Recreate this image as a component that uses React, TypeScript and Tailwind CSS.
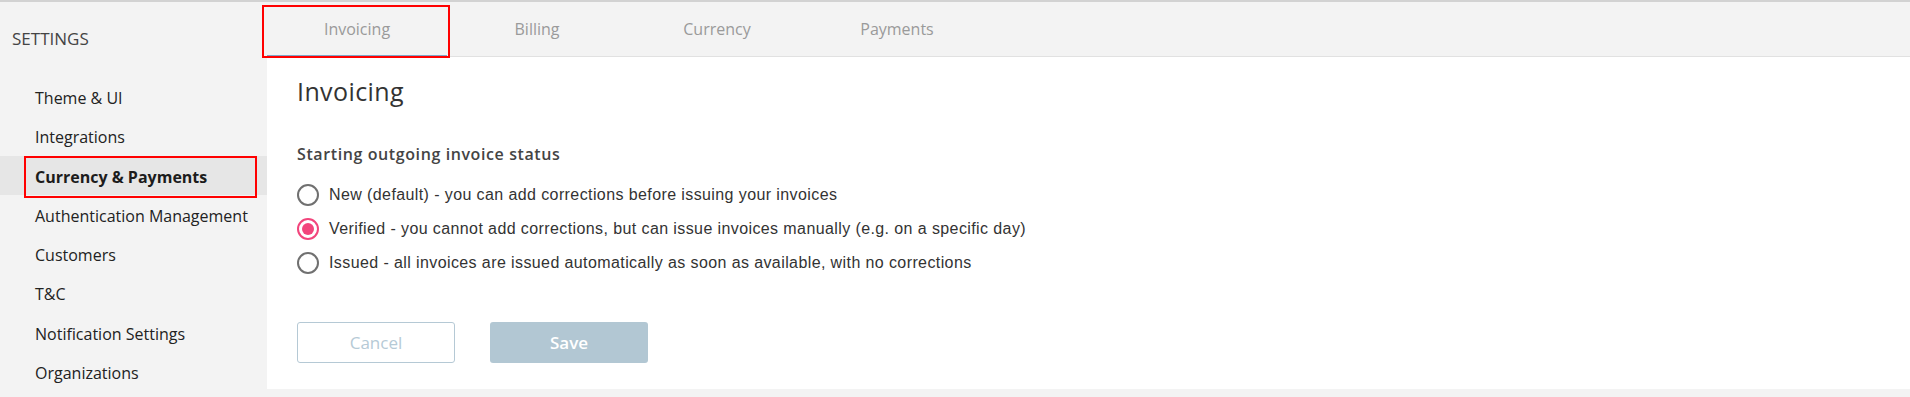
import { useState } from "react";

const sideItems = [
  "Theme & UI",
  "Integrations",
  "Currency & Payments",
  "Authentication Management",
  "Customers",
  "T&C",
  "Notification Settings",
  "Organizations",
];

const tabs = ["Invoicing", "Billing", "Currency", "Payments"];

const options = [
  "New (default) - you can add corrections before issuing your invoices",
  "Verified - you cannot add corrections, but can issue invoices manually (e.g. on a specific day)",
  "Issued - all invoices are issued automatically as soon as available, with no corrections",
];

const App = () => {
  const [status, setStatus] = useState(1);

  return (
    <div className="relative h-[397px] w-full overflow-hidden border-t-2 border-[#d2d2d2] bg-[#f3f3f3] font-['Open_Sans',sans-serif]">
      <div className="flex h-full">
        {/* sidebar */}
        <aside className="w-[267px] shrink-0 pt-[25px]">
          <div className="h-6 pl-3 text-[17px] leading-6 text-[#444]">SETTINGS</div>
          <ul className="mt-[26px]">
            {sideItems.map((item) => (
              <li
                key={item}
                className={
                  item === "Currency & Payments"
                    ? "h-[39.3px] bg-[#e6e6e6] pl-[35px] pt-[3px] text-[16px] font-bold leading-[36.3px] text-[#1c1c1c]"
                    : "h-[39.3px] pl-[35px] pt-[3px] text-[16px] leading-[36.3px] text-[#222]"
                }
              >
                {item}
              </li>
            ))}
          </ul>
        </aside>

        {/* main */}
        <main className="flex flex-1 flex-col pb-2">
          <nav className="flex h-[55px] shrink-0 border-b border-[#e1e1e1]">
            {tabs.map((t, i) => (
              <div
                key={t}
                className={`flex w-[180px] items-center justify-center text-[16px] text-[#9a9a9a] ${
                  i === 0 ? "-mb-px border-b-2 border-[#7fa6c8]" : ""
                }`}
              >
                {t}
              </div>
            ))}
          </nav>

          <section className="flex-1 bg-white pl-[30px] pt-[17px]">
            <h1 className="h-[34px] text-[25px] leading-[34px] tracking-[0.4px] text-[#333]">Invoicing</h1>
            <h2 className="mt-[35px] h-[22px] text-[16px] font-semibold leading-[22px] tracking-[0.6px] text-[#444]">
              Starting outgoing invoice status
            </h2>

            <div className="mt-[13px] flex flex-col">
              {options.map((opt, i) => (
                <label
                  key={i}
                  className="flex h-[34px] cursor-pointer items-center gap-[10px]"
                  onClick={() => setStatus(i)}
                >
                  {status === i ? (
                    <span className="flex h-[22px] w-[22px] items-center justify-center rounded-full border-2 border-[#f2457c]">
                      <span className="h-[12px] w-[12px] rounded-full bg-[#f2457c]" />
                    </span>
                  ) : (
                    <span className="h-[22px] w-[22px] rounded-full border-2 border-[#707070]" />
                  )}
                  <span className="font-['Liberation_Sans',Arial,sans-serif] text-[16px] tracking-[0.4px] text-[#333]">
                    {opt}
                  </span>
                </label>
              ))}
            </div>

            <div className="mt-[42px] flex gap-[35px]">
              <button className="h-[41px] w-[158px] rounded-[3px] border border-[#b5c9d5] bg-white text-[17px] text-[#b6cad6]">
                Cancel
              </button>
              <button className="h-[41px] w-[158px] rounded-[3px] bg-[#b2c7d3] text-[17px] font-semibold text-white">
                Save
              </button>
            </div>
          </section>
        </main>
      </div>

      {/* annotation boxes */}
      <div className="pointer-events-none absolute left-[262px] top-[3px] h-[53px] w-[188px] border-2 border-[#ff0000]" />
      <div className="pointer-events-none absolute left-[24px] top-[154px] h-[42px] w-[233px] border-2 border-[#ff0000]" />
    </div>
  );
};

export default App;
